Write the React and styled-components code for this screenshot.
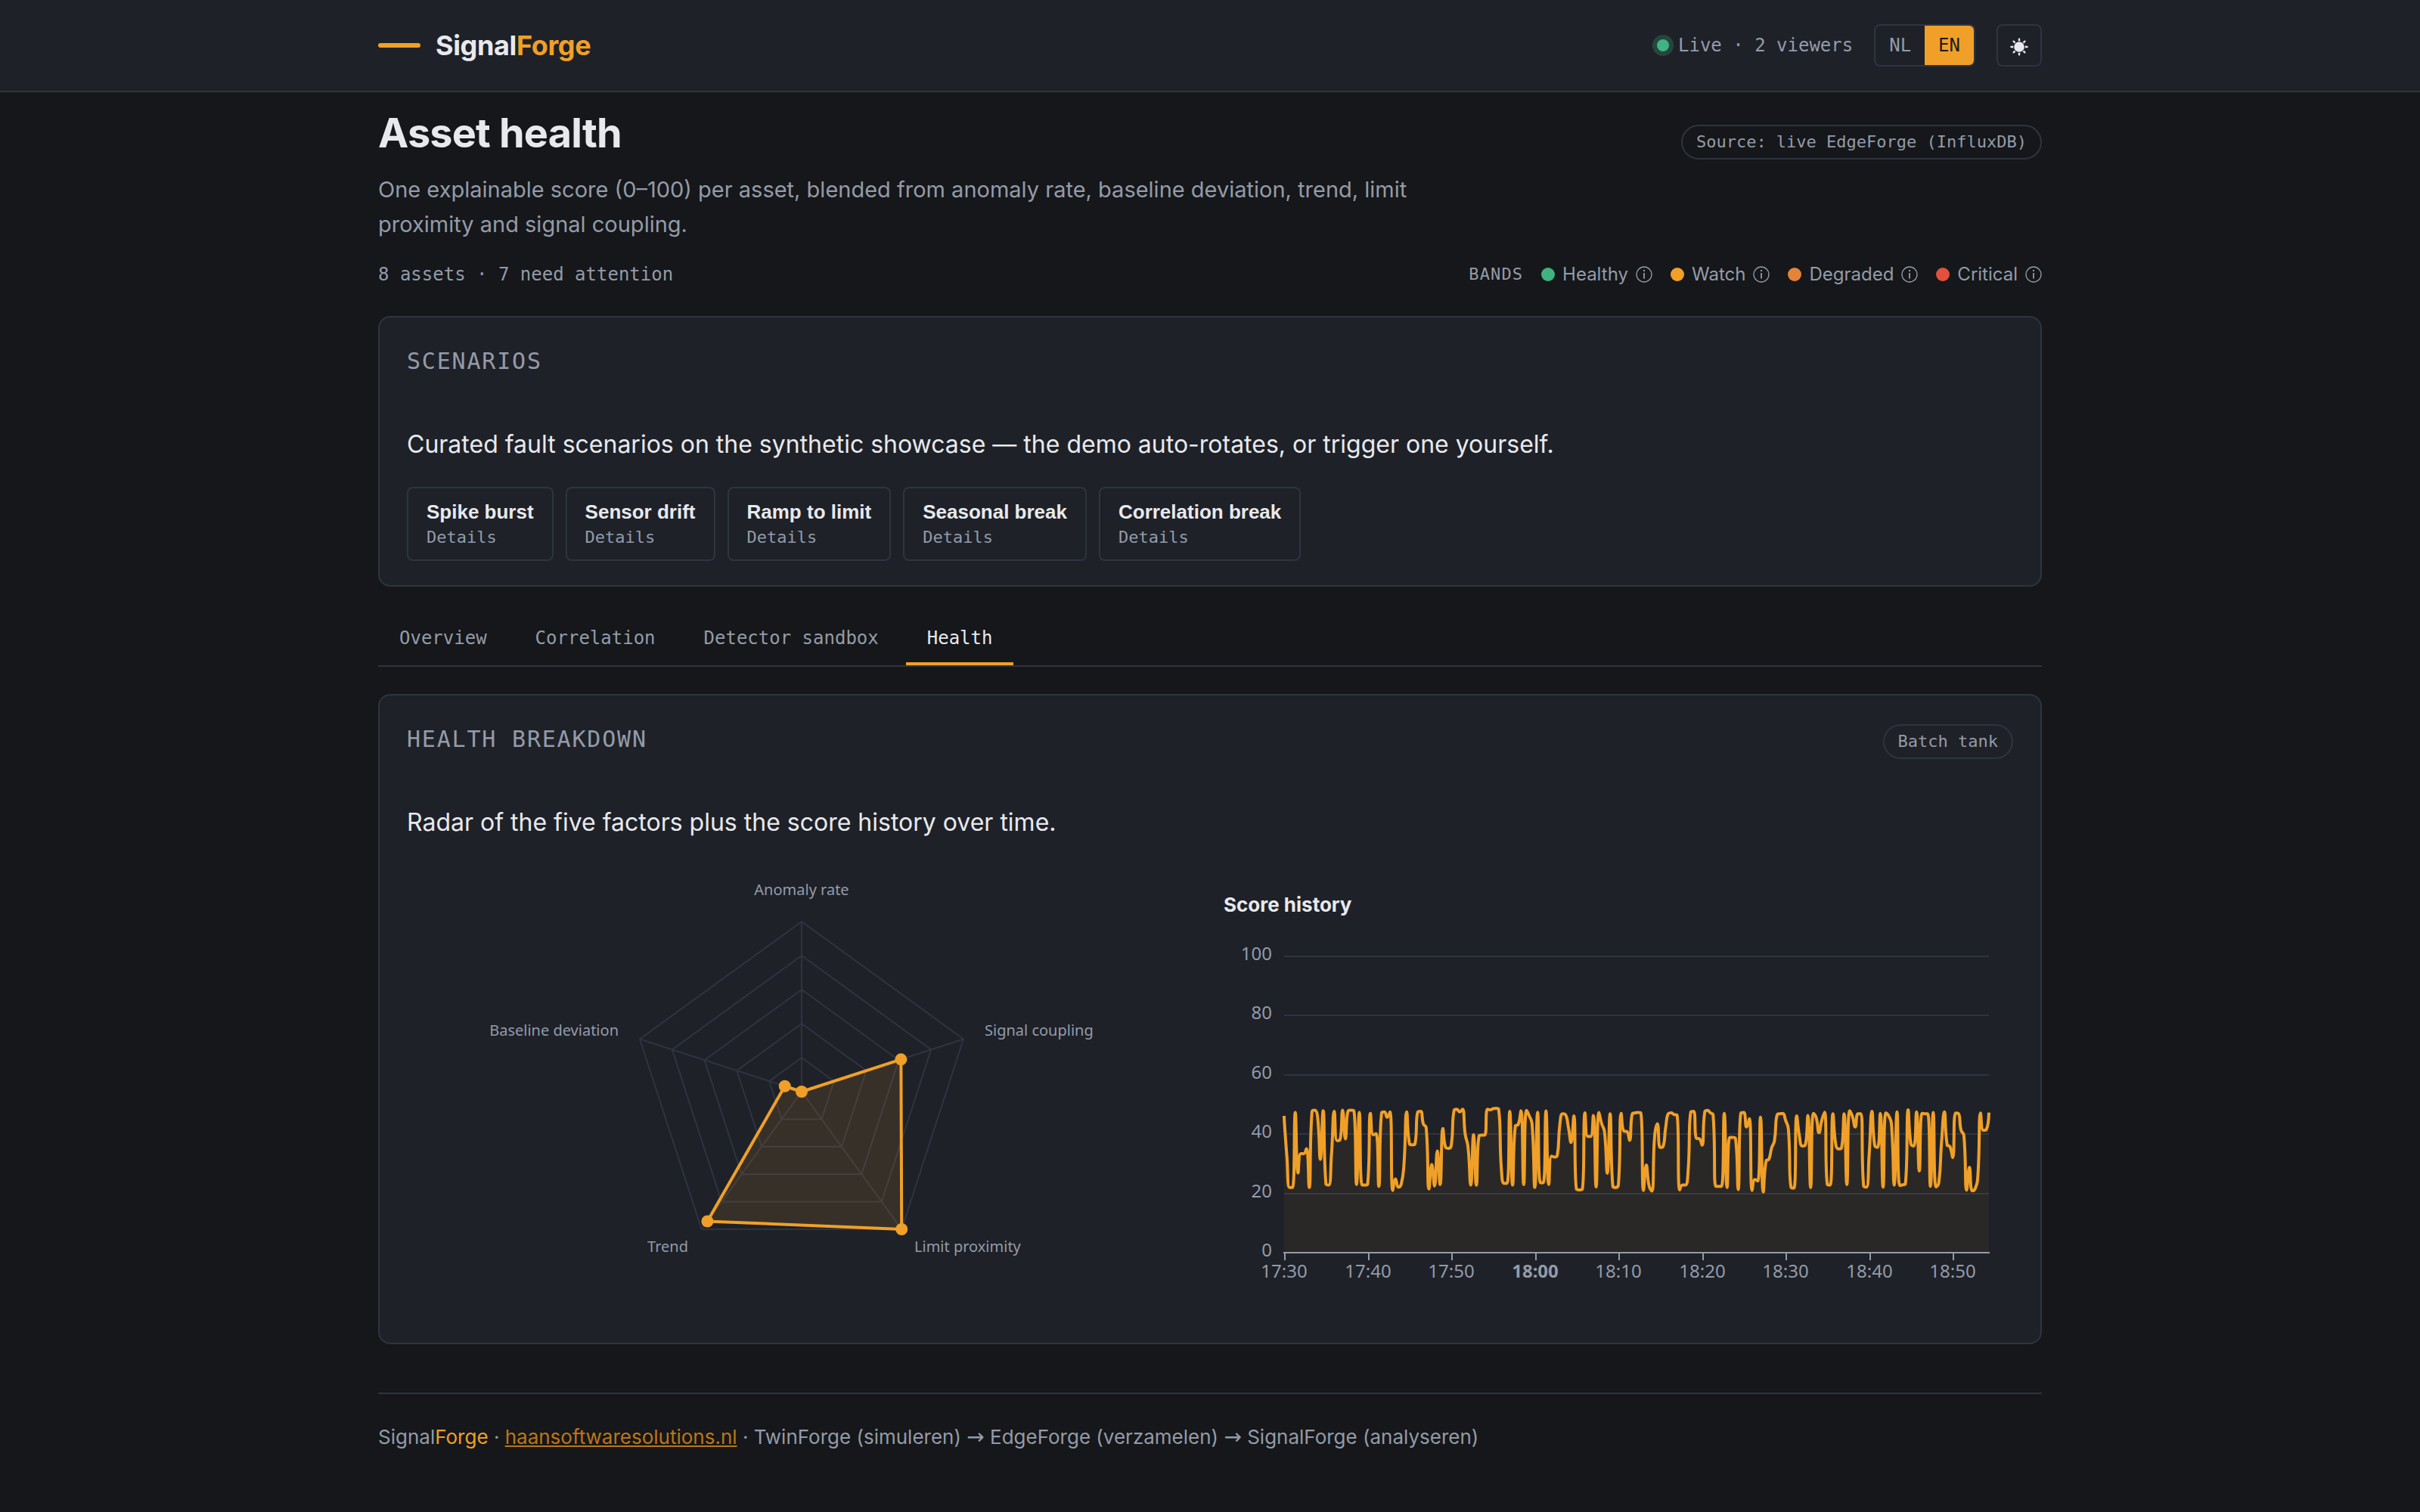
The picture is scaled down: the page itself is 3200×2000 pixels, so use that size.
import React from "react";
import styled, { createGlobalStyle, ThemeProvider } from "styled-components";

const theme = {
  page: "#15171a",
  panel: "#1e2128",
  line: "#2e3440",
  text: "#e8e9ed",
  muted: "#949ba8",
  accent: "#f0a028",
  accentDim: "#bd7614",
  healthy: "#3fb380",
  degraded: "#e3843a",
  critical: "#e2513b",
  sans: '"Inter", "Liberation Sans", sans-serif',
  ui: '"Liberation Sans", Arial, sans-serif',
  mono: '"DejaVu Sans Mono", "Liberation Mono", monospace',
  chart: '"Noto Sans", "Open Sans", sans-serif',
};

const GlobalStyle = createGlobalStyle`
  *, *::before, *::after { box-sizing: border-box; }
  body {
    margin: 0;
    background: ${theme.page};
    color: ${theme.text};
    font-family: ${theme.sans};
    font-size: 32px;
  }
  h1, h2, h3, p { margin: 0; }
`;

const Container = styled.div`
  max-width: 2272px;
  margin: 0 auto;
  padding: 0 36px;
`;

const TopBar = styled.header`
  background: ${(p) => p.theme.panel};
  border-bottom: 2px solid ${(p) => p.theme.line};
`;

const TopBarInner = styled(Container)`
  display: flex;
  align-items: center;
  justify-content: space-between;
  padding-top: 32px;
  padding-bottom: 32px;
`;

const Brand = styled.div`
  display: flex;
  align-items: center;
  gap: 20px;
  font-size: 36px;
  line-height: 56px;
  font-weight: 700;
  letter-spacing: -0.01em;
`;

const BrandBar = styled.span`
  width: 56px;
  height: 6px;
  border-radius: 3px;
  background: ${(p) => p.theme.accent};
`;

const Accent = styled.span`
  color: ${(p) => p.theme.accent};
`;

const Tools = styled.div`
  display: flex;
  align-items: center;
  gap: 28px;
`;

const Live = styled.div`
  display: flex;
  align-items: center;
  gap: 12px;
  font-family: ${(p) => p.theme.mono};
  font-size: 24px;
  line-height: 38px;
  color: ${(p) => p.theme.muted};
`;

const LiveDot = styled.span`
  width: 16px;
  height: 16px;
  border-radius: 50%;
  background: ${(p) => p.theme.healthy};
  box-shadow: 0 0 0 6px rgba(63, 179, 128, 0.25);
`;

const LangSwitch = styled.div`
  display: flex;
  height: 56px;
  border: 2px solid ${(p) => p.theme.line};
  border-radius: 8px;
  overflow: hidden;
`;

const LangButton = styled.button`
  padding: 0 18px;
  border: 0;
  background: ${(p) => (p.$active ? p.theme.accent : "transparent")};
  color: ${(p) => (p.$active ? "#1a1a1a" : p.theme.muted)};
  font-family: ${(p) => p.theme.mono};
  font-size: 24px;
  cursor: pointer;
`;

const ThemeButton = styled.button`
  display: flex;
  align-items: center;
  justify-content: center;
  width: 60px;
  height: 56px;
  padding: 4px 0 0;
  border: 2px solid ${(p) => p.theme.line};
  border-radius: 8px;
  background: transparent;
  color: ${(p) => p.theme.text};
  cursor: pointer;
`;

const Main = styled(Container).attrs({ as: "main" })`
  padding-top: 22px;
`;

const PageHead = styled.div`
  display: flex;
  align-items: baseline;
  justify-content: space-between;
  margin-bottom: 24px;
`;

const PageTitle = styled.h1`
  margin-bottom: 20px;
  font-size: 54px;
  line-height: 64px;
  font-weight: 700;
  letter-spacing: -0.015em;
`;

const Subtitle = styled.p`
  max-width: 1400px;
  font-size: 29px;
  line-height: 46px;
  color: ${(p) => p.theme.muted};
`;

const Pill = styled.span`
  padding: 3px 18px;
  border: 2px solid ${(p) => p.theme.line};
  border-radius: 24px;
  font-family: ${(p) => p.theme.mono};
  font-size: 22px;
  line-height: 36px;
  white-space: nowrap;
  color: ${(p) => p.theme.muted};
`;

const StatsRow = styled.div`
  display: flex;
  align-items: center;
  justify-content: space-between;
  margin-bottom: 36px;
  line-height: 38px;
  font-size: 24px;
  color: ${(p) => p.theme.muted};
`;

const Stats = styled.p`
  font-family: ${(p) => p.theme.mono};
`;

const Bands = styled.div`
  display: flex;
  align-items: center;
  gap: 24px;
`;

const BandsLabel = styled.span`
  font-family: ${(p) => p.theme.mono};
  font-size: 22px;
  letter-spacing: 0.05em;
`;

const Band = styled.span`
  display: flex;
  align-items: center;
  gap: 10px;
`;

const BandDot = styled.span`
  width: 18px;
  height: 18px;
  border-radius: 50%;
  background: ${(p) => p.theme[p.$tone]};
`;

const Card = styled.section`
  padding: 36px 36px 32px;
  background: ${(p) => p.theme.panel};
  border: 2px solid ${(p) => p.theme.line};
  border-radius: 16px;
`;

const CardHead = styled.div`
  display: flex;
  align-items: baseline;
  justify-content: space-between;
  min-height: 48px;
  margin-bottom: 58px;
`;

const CardTitle = styled.h2`
  font-family: ${(p) => p.theme.mono};
  font-size: 30px;
  line-height: 44px;
  font-weight: 400;
  letter-spacing: 0.06em;
  text-transform: uppercase;
  color: ${(p) => p.theme.muted};
`;

const Lead = styled.p`
  margin-bottom: 30px;
  font-size: 32px;
  line-height: 52px;
`;

const ScenarioList = styled.div`
  display: flex;
  flex-wrap: wrap;
  gap: 16px;
`;

const ScenarioButton = styled.button`
  display: flex;
  flex-direction: column;
  padding: 14px 24px 12px;
  border: 2px solid ${(p) => p.theme.line};
  border-radius: 8px;
  background: transparent;
  color: ${(p) => p.theme.text};
  font-family: ${(p) => p.theme.ui};
  font-size: 26px;
  line-height: 34px;
  font-weight: 700;
  text-align: left;
  cursor: pointer;
`;

const ScenarioHint = styled.span`
  font-family: ${(p) => p.theme.mono};
  font-size: 22px;
  font-weight: 400;
  color: ${(p) => p.theme.muted};
`;

const Tabs = styled.nav`
  display: flex;
  gap: 8px;
  margin: 36px 0;
  border-bottom: 2px solid ${(p) => p.theme.line};
`;

const Tab = styled.button`
  padding: 13px 28px;
  border: 0;
  border-bottom: 4px solid ${(p) => (p.$active ? p.theme.accent : "transparent")};
  background: transparent;
  color: ${(p) => (p.$active ? p.theme.text : p.theme.muted)};
  font-family: ${(p) => p.theme.mono};
  font-size: 24px;
  line-height: 38px;
  cursor: pointer;
`;

const Charts = styled.div`
  display: grid;
  grid-template-columns: 1fr 1fr;
  gap: 36px;
  align-items: center;
`;

const ChartSvg = styled.svg`
  display: block;
  width: 100%;
  height: auto;
  font-family: ${(p) => p.theme.chart};
  fill: ${(p) => p.theme.muted};
`;

const ChartTitle = styled.h3`
  margin-bottom: 14px;
  font-size: 26px;
  line-height: 42px;
  font-weight: 700;
`;

const Footer = styled.footer`
  margin-top: 64px;
  padding: 36px 0 60px;
  border-top: 2px solid ${(p) => p.theme.line};
  font-size: 26px;
  line-height: 42px;
  color: ${(p) => p.theme.muted};
`;

const FooterLink = styled.a`
  color: ${(p) => p.theme.accentDim};
`;

const Arrow = styled.span`
  font-family: "DejaVu Sans", sans-serif;
  font-size: 28px;
  line-height: 1;
`;

const bands = [
  { name: "Healthy", tone: "healthy" },
  { name: "Watch", tone: "accent" },
  { name: "Degraded", tone: "degraded" },
  { name: "Critical", tone: "critical" },
];

const scenarios = ["Spike burst", "Sensor drift", "Ramp to limit", "Seasonal break", "Correlation break"];
const tabs = ["Overview", "Correlation", "Detector sandbox", "Health"];

const InfoIcon = () => (
  <svg width="22" height="22" viewBox="0 0 22 22" fill="none" stroke="currentColor" aria-hidden="true">
    <circle cx="11" cy="11" r="10" strokeWidth="1.3" />
    <path d="M11 9v7.5" strokeWidth="1.8" />
    <path d="M11 5v2" strokeWidth="2" />
  </svg>
);

const SunIcon = () => (
  <svg width="24" height="24" viewBox="-12 -12 24 24" aria-hidden="true">
    <circle r="6.8" fill="currentColor" />
    {[0, 45, 90, 135, 180, 225, 270, 315].map((a) => (
      <path key={a} d="M-1.4 -7.8h2.8l-.5 -3.8h-1.8z" fill="currentColor" transform={`rotate(${a})`} />
    ))}
  </svg>
);

/* Radar: axes run counter-clockwise from the top. */
const radarCentre = { x: 522, y: 300 };
const radarRadius = 225;
const radarAxes = [
  { name: "Anomaly rate", value: 0, x: 522, y: 40, anchor: "middle" },
  { name: "Baseline deviation", value: 0.104, x: 280, y: 226, anchor: "end" },
  { name: "Trend", value: 0.942, x: 372, y: 512, anchor: "end" },
  { name: "Limit proximity", value: 1, x: 671, y: 512, anchor: "start" },
  { name: "Signal coupling", value: 0.614, x: 764, y: 226, anchor: "start" },
];

const radarPoint = (index, share) => {
  const angle = Math.PI / 2 + (index * 2 * Math.PI) / 5;
  return [
    radarCentre.x + Math.cos(angle) * radarRadius * share,
    radarCentre.y - Math.sin(angle) * radarRadius * share,
  ];
};

const ring = (share) => radarAxes.map((_, i) => radarPoint(i, share).join(",")).join(" ");

const RadarChart = () => {
  const points = radarAxes.map((axis, i) => radarPoint(i, axis.value));
  return (
    <ChartSvg viewBox="0 0 1044 600" role="img" aria-label="Radar of the five health factors">
      <g fill="none" stroke={theme.line} strokeWidth="2">
        {[0.2, 0.4, 0.6, 0.8, 1].map((share) => (
          <polygon key={share} points={ring(share)} />
        ))}
        {radarAxes.map((axis, i) => {
          const [x, y] = radarPoint(i, 1);
          return <line key={axis.name} x1={radarCentre.x} y1={radarCentre.y} x2={x} y2={y} />;
        })}
      </g>
      <polygon
        points={points.map((p) => p.join(",")).join(" ")}
        fill="rgba(240, 160, 40, 0.12)"
        stroke={theme.accent}
        strokeWidth="4"
        strokeLinejoin="bevel"
      />
      {points.map(([x, y], i) => (
        <circle key={i} cx={x} cy={y} r="8" fill={theme.accent} />
      ))}
      {radarAxes.map((axis) => (
        <text key={axis.name} x={axis.x} y={axis.y} textAnchor={axis.anchor} fontSize="20">
          {axis.name}
        </text>
      ))}
    </ChartSvg>
  );
};

/* One score every 20 seconds, 17:30 to 18:54. */
const scores = [
  46.2, 32.4, 22, 22, 47.3, 26.9, 33.4, 33.4, 35.1, 22, 47.6, 48.1, 46, 31.5, 47.9, 23.3, 22.8, 33, 47.7, 37.8,
  38, 48.1, 38.4, 47.9, 48.1, 48, 23, 47.3, 22.8, 22.8, 23.2, 47, 39.8, 40.2, 22.4, 47.2, 47.5, 45.7, 47.5, 21,
  24.9, 22.1, 23, 29.5, 47.5, 36.8, 36.4, 36.8, 47.5, 47.7, 43.4, 42.2, 21.5, 29.8, 22.5, 34.3, 23, 41.9, 35.5, 35.2,
  36.2, 48, 48.4, 47.5, 48.4, 40, 35.8, 22.8, 39.8, 22.8, 39.5, 39.7, 39.7, 48.4, 48.2, 48.6, 48.7, 48.4, 28, 23.4,
  23.4, 47.7, 22.8, 42.8, 43.2, 47.9, 23, 48, 46.2, 43.5, 22, 47.4, 23.6, 23.6, 47.8, 23, 32.6, 32.3, 32.7, 43.5,
  46.9, 46.6, 42.6, 37.2, 46.2, 21.3, 21.2, 21.3, 47.2, 39.2, 39.2, 46.3, 22.2, 47.3, 43.5, 40.9, 26.8, 46.9, 22.4, 22,
  23, 47, 41, 40.9, 37.9, 46.9, 47.2, 47.3, 47.2, 21, 29.6, 22.6, 20.8, 39.2, 43.5, 35.5, 35.8, 42.6, 47, 47.2,
  46.6, 46.5, 21.2, 22.8, 22.8, 27.3, 47.5, 47.7, 38.6, 38.5, 36.3, 47.5, 48, 47.2, 46.5, 22.4, 22.4, 22.4, 47, 22,
  38.9, 38.9, 38.6, 21.3, 47.2, 47.3, 42.4, 45.2, 21, 24.7, 24.2, 45.7, 20.5, 31, 31.5, 35.4, 37.7, 46.6, 46.9, 47,
  44.7, 41.8, 22, 21.8, 46.2, 39.2, 36, 36.2, 46.3, 22, 47, 45.6, 40.5, 44.7, 47.4, 23, 22.8, 46.9, 36.6, 35,
  35.2, 46.9, 23, 47.9, 46, 42.4, 46.9, 46.9, 22.6, 22.1, 33, 47.7, 36.2, 35.5, 47, 22.1, 47.2, 46.2, 43.5, 22.8,
  47.5, 22.7, 22.9, 23.2, 48.2, 36.6, 36, 47.5, 27.6, 47, 46.9, 46.9, 22.4, 47.3, 22.2, 23.5, 37.5, 47.5, 36.4, 35.8,
  32.1, 47.1, 47, 41.3, 39.6, 21.1, 28.8, 20.9, 21.5, 25.6, 47.1, 41.3, 41.5, 47.3,
];

const plot = { left: 80, right: 1012, top: 33, bottom: 425 };
const scoreY = (v) => plot.bottom - (v / 100) * (plot.bottom - plot.top);

const clamp = (v, a, b) => Math.min(Math.max(v, Math.min(a, b)), Math.max(a, b));

/* Smooth curve through the points whose handles never overshoot a neighbour. */
const smoothPath = (pts, smooth) => {
  let d = `M${pts[0][0]},${pts[0][1]}`;
  let [outX, outY] = pts[0];
  for (let i = 1; i < pts.length; i += 1) {
    const [px, py] = pts[i - 1];
    const [x, y] = pts[i];
    let inX = x;
    let inY = y;
    let nextX = x;
    let nextY = y;
    if (i < pts.length - 1) {
      const [nx, ny] = pts[i + 1];
      const lenPrev = Math.hypot(x - px, y - py);
      const lenNext = Math.hypot(nx - x, ny - y);
      const share = lenNext / (lenNext + lenPrev);
      nextX = clamp(x + (nx - px) * smooth * share, x, nx);
      nextY = clamp(y + (ny - py) * smooth * share, y, ny);
      inX = clamp(x - ((nextX - x) * lenPrev) / lenNext, px, x);
      inY = clamp(y - ((nextY - y) * lenPrev) / lenNext, py, y);
      nextX = x + ((x - inX) * lenNext) / lenPrev;
      nextY = y + ((y - inY) * lenNext) / lenPrev;
    }
    d += `C${outX.toFixed(2)},${outY.toFixed(2)} ${inX.toFixed(2)},${inY.toFixed(2)} ${x.toFixed(2)},${y.toFixed(2)}`;
    outX = nextX;
    outY = nextY;
  }
  return d;
};

const times = ["17:30", "17:40", "17:50", "18:00", "18:10", "18:20", "18:30", "18:40", "18:50"];

const HistoryChart = () => {
  const step = (plot.right - plot.left) / (scores.length - 1);
  const line = smoothPath(scores.map((v, i) => [plot.left + i * step, scoreY(v)]), 0.5);
  return (
    <ChartSvg viewBox="0 0 1044 480" role="img" aria-label="Score history, 17:30 to 18:54">
      {[100, 80, 60, 40, 20].map((v) => (
        <line
          key={v}
          x1={plot.left}
          x2={plot.right}
          y1={Math.round(scoreY(v))}
          y2={Math.round(scoreY(v))}
          stroke={theme.line}
          strokeWidth="2"
        />
      ))}
      <path d={`${line}L${plot.right},${plot.bottom}L${plot.left},${plot.bottom}Z`} fill={theme.accent} opacity="0.06" />
      <g stroke={theme.muted} strokeWidth="2">
        <line x1={plot.left - 1} x2={plot.right + 1} y1={plot.bottom} y2={plot.bottom} />
        {times.map((t, i) => {
          const x = 81 + Math.round(i * 110.5);
          return <line key={t} x1={x} x2={x} y1={plot.bottom} y2={plot.bottom + 10} />;
        })}
      </g>
      <path d={line} fill="none" stroke={theme.accent} strokeWidth="4" strokeLinejoin="bevel" />
      <g fontSize="24" textAnchor="end">
        {[100, 80, 60, 40, 20, 0].map((v) => (
          <text key={v} x="64" y={Math.round(scoreY(v)) + 5}>
            {v}
          </text>
        ))}
      </g>
      <g fontSize="24" textAnchor="middle">
        {times.map((t, i) => (
          <text key={t} x={80 + Math.round(i * 110.5)} y="458" fontWeight={t === "18:00" ? 700 : 400}>
            {t}
          </text>
        ))}
      </g>
    </ChartSvg>
  );
};

export default function App() {
  return (
    <ThemeProvider theme={theme}>
      <GlobalStyle />
      <TopBar>
        <TopBarInner>
          <Brand>
            <BrandBar />
            <span>
              Signal<Accent>Forge</Accent>
            </span>
          </Brand>
          <Tools>
            <Live>
              <LiveDot />
              Live · 2 viewers
            </Live>
            <LangSwitch>
              <LangButton type="button">NL</LangButton>
              <LangButton type="button" $active>
                EN
              </LangButton>
            </LangSwitch>
            <ThemeButton type="button" aria-label="Switch theme">
              <SunIcon />
            </ThemeButton>
          </Tools>
        </TopBarInner>
      </TopBar>
      <Main>
        <PageHead>
          <div>
            <PageTitle>Asset health</PageTitle>
            <Subtitle>
              One explainable score (0–100) per asset, blended from anomaly rate, baseline deviation, trend, limit
              proximity and signal coupling.
            </Subtitle>
          </div>
          <Pill>Source: live EdgeForge (InfluxDB)</Pill>
        </PageHead>
        <StatsRow>
          <Stats>8 assets · 7 need attention</Stats>
          <Bands>
            <BandsLabel>BANDS</BandsLabel>
            {bands.map((band) => (
              <Band key={band.name}>
                <BandDot $tone={band.tone} />
                {band.name}
                <InfoIcon />
              </Band>
            ))}
          </Bands>
        </StatsRow>
        <Card>
          <CardHead>
            <CardTitle>Scenarios</CardTitle>
          </CardHead>
          <Lead>Curated fault scenarios on the synthetic showcase — the demo auto-rotates, or trigger one yourself.</Lead>
          <ScenarioList>
            {scenarios.map((name) => (
              <ScenarioButton key={name} type="button">
                {name}
                <ScenarioHint>Details</ScenarioHint>
              </ScenarioButton>
            ))}
          </ScenarioList>
        </Card>
        <Tabs>
          {tabs.map((name) => (
            <Tab key={name} type="button" $active={name === "Health"}>
              {name}
            </Tab>
          ))}
        </Tabs>
        <Card>
          <CardHead>
            <CardTitle>Health breakdown</CardTitle>
            <Pill>Batch tank</Pill>
          </CardHead>
          <Lead>Radar of the five factors plus the score history over time.</Lead>
          <Charts>
            <RadarChart />
            <div>
              <ChartTitle>Score history</ChartTitle>
              <HistoryChart />
            </div>
          </Charts>
        </Card>
        <Footer>
          Signal<Accent>Forge</Accent> · <FooterLink href="#">haansoftwaresolutions.nl</FooterLink> · TwinForge
          (simuleren) <Arrow>→</Arrow> EdgeForge (verzamelen) <Arrow>→</Arrow> SignalForge (analyseren)
        </Footer>
      </Main>
    </ThemeProvider>
  );
}
